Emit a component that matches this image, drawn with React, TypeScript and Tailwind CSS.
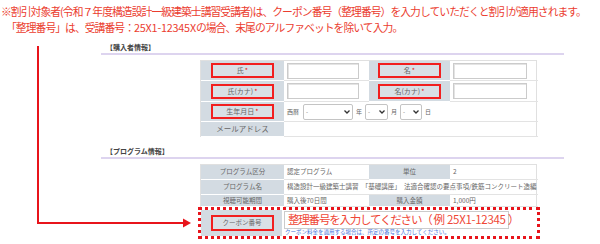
const RedLabel = ({ text, req = true }: { text: string; req?: boolean }) => (
  <div className="w-[63px] h-[15px] border-2 border-[#f21f1f] bg-[#d9e0e6] flex items-center justify-center text-[7px] text-[#666]">
    {text}
    {req && <span className="text-[#e02020] ml-[1px]">*</span>}
  </div>
);

const Head = ({ children, tall = false }: { children: React.ReactNode; tall?: boolean }) => (
  <div
    className={
      "bg-[#d3dbe2] border-b border-white flex items-center justify-center text-[#666] " +
      (tall ? "text-[7px]" : "text-[6.5px]")
    }
  >
    {children}
  </div>
);

const Cell = ({ children, span = "" }: { children?: React.ReactNode; span?: string }) => (
  <div className={"border-b border-[#e3e3e3] flex items-center pl-[3px] text-[6.5px] text-[#666] " + span}>
    {children}
  </div>
);

const TextInput = ({ w }: { w: string }) => (
  <div className={"h-[16px] bg-white border border-[#cbcbcb] shadow-[inset_1px_1px_0_#e4e4e4] " + w} />
);

const Select = ({ w }: { w: string }) => (
  <div
    className={
      "h-[16px] bg-white border border-[#c4c4c4] rounded-[2px] flex items-center justify-between px-[2px] text-[6px] text-[#777] " +
      w
    }
  >
    <span>-</span>
    <svg width="6" height="4" viewBox="0 0 6 4">
      <path d="M0.5 0.5 L3 3 L5.5 0.5" stroke="#333" strokeWidth="1.3" fill="none" />
    </svg>
  </div>
);

const Section = ({ title }: { title: string }) => (
  <div className="h-[13px] flex items-end pl-[5px] pb-[1px] text-[7px] font-bold text-[#444] border-b-2 border-[#ddd4ef]">
    {title}
  </div>
);

export default function App() {
  return (
    <div className="relative w-[600px] h-[244px] bg-white overflow-hidden font-['Noto_Sans_CJK_JP',sans-serif]">
      <div className="pt-[3px] text-[10.8px] leading-[16px] tracking-[-0.95px] text-[#eb3d2f] whitespace-nowrap">
        <p className="pl-[1px]">
          ※割引対象者(令和７年度構造設計一級建築士講習受講者)は、クーポン番号（整理番号）を入力していただくと割引が適用されます。
        </p>
        <p className="pl-[6px]">
          「整理番号」は、受講番号：<span className="tracking-[-0.2px]">25X1-12345X</span>
          の場合、末尾のアルファベットを除いて入力。
        </p>
      </div>

      <div className="ml-[101px] w-[463px] mt-[7px]">
        <Section title="【購入者情報】" />
        <div className="ml-[99px] mt-[5px] w-[337px] border border-[#e0e0e0] border-b-0 grid grid-cols-[83px_85px_81px_88px] grid-rows-[20px_21px_20px_15px]">
          <Head tall>
            <RedLabel text="氏" />
          </Head>
          <Cell>
            <TextInput w="w-[72px]" />
          </Cell>
          <Head tall>
            <RedLabel text="名" />
          </Head>
          <Cell>
            <TextInput w="w-[74px]" />
          </Cell>

          <Head tall>
            <RedLabel text="氏(カナ)" />
          </Head>
          <Cell>
            <TextInput w="w-[72px]" />
          </Cell>
          <Head tall>
            <RedLabel text="名(カナ)" />
          </Head>
          <Cell>
            <TextInput w="w-[74px]" />
          </Cell>

          <Head tall>
            <RedLabel text="生年月日" />
          </Head>
          <Cell span="col-span-3 gap-[3px] text-[6px]">
            <span className="mr-[1px]">西暦</span>
            <Select w="w-[50px]" />
            <span>年</span>
            <Select w="w-[23px]" />
            <span>月</span>
            <Select w="w-[22px]" />
            <span>日</span>
          </Cell>

          <Head tall>
            <span className="text-[7.5px]">メールアドレス</span>
          </Head>
          <Cell span="col-span-3" />
        </div>

        <div className="mt-[9px]">
          <Section title="【プログラム情報】" />
        </div>
        <div className="ml-[99px] mt-[5px] w-[337px] border border-[#e0e0e0] border-b-0 grid grid-cols-[83px_85px_81px_88px] grid-rows-[15px_15px_12px]">
          <Head>プログラム区分</Head>
          <Cell>認定プログラム</Cell>
          <Head>単位</Head>
          <Cell>2</Cell>

          <Head>プログラム名</Head>
          <Cell span="col-span-3 whitespace-nowrap">
            構造設計一級建築士講習　「基礎講座」　法適合確認の要点事項/鉄筋コンクリート造編
          </Cell>

          <Head>視聴可能期間</Head>
          <Cell>購入後70日間</Cell>
          <Head>購入金額</Head>
          <Cell>1,000円</Cell>
        </div>

        <div className="ml-[97px] w-[342px] h-[32px] border-[3px] border-dotted border-[#e8141b] bg-white flex">
          <div className="w-[81px] bg-[#d3dbe2] flex items-center justify-center pl-[1px]">
            <div className="w-[63px] h-[16px] border-2 border-[#f21f1f] bg-[#d9e0e6] flex items-center justify-center text-[6.5px] text-[#666]">
              クーポン番号
            </div>
          </div>
          <div className="pl-[2px] pt-[1px] flex flex-col">
            <div className="w-[225px] h-[18px] bg-white border border-[#cbcbcb] flex items-center pl-[3px] text-[11.5px] text-[#ef4736] whitespace-nowrap">
              <span className="tracking-[-1.2px]">整理番号を入力してください（</span>
              <span className="tracking-[-0.3px] ml-[2px]">例 25X1-12345 ）</span>
            </div>
            <div className="text-[5.5px] leading-[7px] text-[#3f73dc] pl-[1px] whitespace-nowrap">
              クーポン料金を適用する場合は、所定の番号を入力してください。
            </div>
          </div>
        </div>
      </div>

      <svg className="absolute inset-0 pointer-events-none" width="600" height="244">
        <path d="M38 46 V223 H184" stroke="#e8141b" strokeWidth="2" fill="none" />
        <polygon points="183,218.5 191,223 183,227.5" fill="#e8141b" />
      </svg>
    </div>
  );
}
